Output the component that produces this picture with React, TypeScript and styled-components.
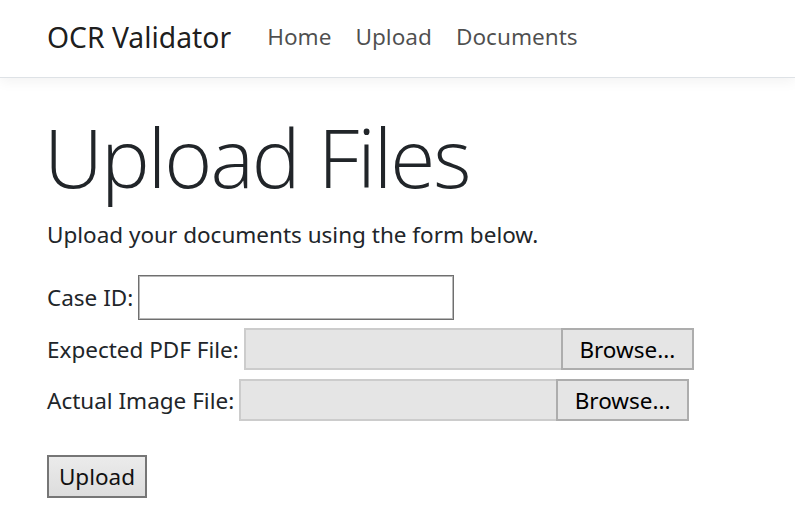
import React from "react";
import styled, { createGlobalStyle } from "styled-components";

const GlobalStyle = createGlobalStyle`
  html, body { margin: 0; padding: 0; background: #ffffff; }
  body {
    font-family: "Segoe UI", "Noto Sans", "Open Sans", sans-serif;
    color: #212529;
  }
  * { box-sizing: border-box; }
`;

const NavBar = styled.header`
  height: 78px;
  border-bottom: 1px solid #dee2e6;
  box-shadow: 0 4px 12px rgba(0, 0, 0, 0.05);
  display: flex;
  align-items: center;
  padding: 0 0 2px 47px;
`;

const Brand = styled.a`
  font-size: 28.3px;
  color: rgba(0, 0, 0, 0.9);
  text-decoration: none;
  margin-right: 36px;
  line-height: 1;
`;

const NavLinks = styled.nav`
  display: flex;
  gap: 24px;
`;

const NavLink = styled.a`
  font-size: 22.6px;
  color: rgba(0, 0, 0, 0.7);
  text-decoration: none;
  line-height: 1;
`;

const Main = styled.main`
  padding: 0 47px;
`;

const Title = styled.h1`
  font-family: "Segoe UI", "Open Sans", "Noto Sans", sans-serif;
  font-weight: 300;
  font-size: 82px;
  letter-spacing: -2px;
  line-height: 100px;
  margin: 28px 0 0 -3px;
`;

const Lead = styled.p`
  font-size: 22.5px;
  line-height: 30px;
  margin: 14px 0 25px;
`;

const Form = styled.form`
  display: flex;
  flex-direction: column;
  align-items: flex-start;
`;

const Row = styled.div<{ $gap?: number }>`
  display: flex;
  align-items: center;
  margin-bottom: ${(p) => p.$gap ?? 8}px;
`;

const Label = styled.label`
  font-size: 22.5px;
  margin-right: 5px;
  white-space: nowrap;
`;

const TextInput = styled.input`
  width: 316px;
  height: 45px;
  border: 1px solid #6f6f6f;
  box-shadow: inset 0 0 0 1px #b8b8b8;
  background: #fff;
  font-size: 22.5px;
  padding: 0 6px;
  outline: none;
`;

const FileBox = styled.div`
  display: flex;
  height: 42px;
`;

const FileName = styled.div`
  width: 317px;
  height: 100%;
  background: #e5e5e5;
  border: 2px solid #cccccc;
  border-right: none;
`;

const BrowseButton = styled.button`
  width: 133px;
  height: 100%;
  background: #e5e5e5;
  border: 2px solid #adadad;
  font-family: inherit;
  font-size: 22.5px;
  color: #000;
  padding: 0;
`;

const SubmitButton = styled.button`
  width: 100px;
  height: 43px;
  background: linear-gradient(#ebebeb, #dddddd);
  border: 2px solid #767676;
  font-family: inherit;
  font-size: 22.5px;
  color: #111;
  padding: 0;
`;

const FileField: React.FC = () => (
  <FileBox>
    <FileName />
    <BrowseButton type="button">Browse...</BrowseButton>
  </FileBox>
);

export default function App() {
  return (
    <>
      <GlobalStyle />
      <NavBar>
        <Brand href="#">OCR Validator</Brand>
        <NavLinks>
          <NavLink href="#">Home</NavLink>
          <NavLink href="#">Upload</NavLink>
          <NavLink href="#">Documents</NavLink>
        </NavLinks>
      </NavBar>
      <Main>
        <Title>Upload Files</Title>
        <Lead>Upload your documents using the form below.</Lead>
        <Form onSubmit={(e) => e.preventDefault()}>
          <Row>
            <Label>Case ID:</Label>
            <TextInput type="text" />
          </Row>
          <Row $gap={9}>
            <Label>Expected PDF File:</Label>
            <FileField />
          </Row>
          <Row $gap={34}>
            <Label>Actual Image File:</Label>
            <FileField />
          </Row>
          <SubmitButton type="submit">Upload</SubmitButton>
        </Form>
      </Main>
    </>
  );
}
